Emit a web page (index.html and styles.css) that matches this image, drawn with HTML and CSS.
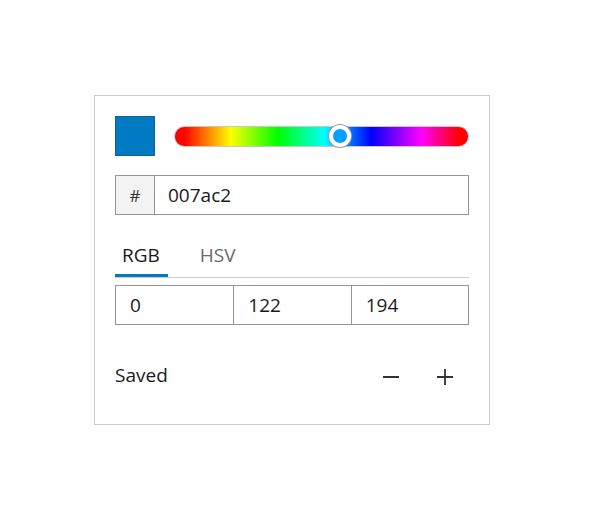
FILE: index.html
```html
<!DOCTYPE html>
<html lang="en">
<head>
<meta charset="utf-8">
<title>Color picker</title>
<link rel="stylesheet" href="styles.css">
</head>
<body>
<div class="picker">
  <div class="top-row">
    <div class="swatch"></div>
    <div class="hue">
      <div class="hue-track"></div>
      <div class="thumb" style="left: 56.3%"></div>
    </div>
  </div>
  <div class="hex">
    <span class="hash">#</span>
    <span class="hex-value">007ac2</span>
  </div>
  <div class="tabs">
    <span class="tab active">RGB</span>
    <span class="tab">HSV</span>
  </div>
  <div class="channels">
    <span class="channel">0</span>
    <span class="channel">122</span>
    <span class="channel">194</span>
  </div>
  <div class="saved-row">
    <span class="saved-label">Saved</span>
    <div class="saved-actions">
      <span class="icon-btn">
        <svg width="16" height="16" viewBox="0 0 16 16"><path d="M0 8h17" stroke="#333" stroke-width="2" fill="none"/></svg>
      </span>
      <span class="icon-btn">
        <svg width="16" height="16" viewBox="0 0 16 16"><path d="M0 8h16M8 0v16" stroke="#333" stroke-width="1.8" fill="none"/></svg>
      </span>
    </div>
  </div>
</div>
</body>
</html>
```

FILE: styles.css
```css
html, body {
  margin: 0;
  padding: 0;
  background: #fff;
}
body {
  font-family: "Open Sans", "Noto Sans", sans-serif;
  color: #1a1a1a;
}
.picker {
  box-sizing: border-box;
  width: 396px;
  margin: 95px 0 0 94px;
  border: 1px solid #cacaca;
  padding: 20px 20px 23px 20px;
}
.top-row {
  display: flex;
  align-items: center;
  gap: 19px;
}
.swatch {
  box-sizing: border-box;
  width: 40px;
  height: 40px;
  background: #007ac2;
  border: 1px solid #1d5c8e;
  flex: none;
}
.hue {
  position: relative;
  flex: 1;
  height: 21px;
}
.hue-track {
  box-sizing: border-box;
  height: 21px;
  border-radius: 11px;
  border: 1px solid #c8c8c8;
  background: linear-gradient(to right,
    #ff0000 3%, #ffff00 19%, #00ff00 35%, #00ffff 51%,
    #0000ff 67%, #ff00ff 84%, #ff0000 97%);
}
.thumb {
  position: absolute;
  top: 50%;
  box-sizing: border-box;
  width: 22px;
  height: 22px;
  margin: -11px 0 0 -11px;
  border-radius: 50%;
  background: #00a1ff;
  border: 4px solid #fff;
  box-shadow: 0 0 0 1px #9a9a9a;
}
.hex {
  box-sizing: border-box;
  display: flex;
  height: 40px;
  margin-top: 19px;
  border: 1px solid #959595;
  font-size: 19px;
}
.hash {
  box-sizing: border-box;
  width: 39px;
  display: flex;
  align-items: center;
  justify-content: center;
  background: #f3f3f3;
  border-right: 1px solid #959595;
  font-size: 17px;
  color: #333;
}
.hex-value {
  display: flex;
  align-items: center;
  padding-left: 13px;
}
.tabs {
  display: flex;
  margin-top: 20px;
  border-bottom: 1px solid #cccccc;
}
.tab {
  font-size: 19px;
  line-height: 20px;
  padding: 10px 8px 9px 7px;
  border-bottom: 3px solid transparent;
  color: #6a6a6a;
  margin-right: 25px;
}
.tab.active {
  color: #1a1a1a;
  border-bottom-color: #007ac2;
}
.channels {
  box-sizing: border-box;
  display: grid;
  grid-template-columns: 1fr 1fr 1fr;
  height: 40px;
  margin-top: 7px;
  border: 1px solid #959595;
  font-size: 19px;
}
.channel {
  display: flex;
  align-items: center;
  padding-left: 14px;
}
.channel + .channel {
  border-left: 1px solid #959595;
}
.saved-row {
  display: flex;
  align-items: center;
  justify-content: space-between;
  height: 48px;
  margin-top: 28px;
  font-size: 19px;
}
.saved-label {
  margin-bottom: 4px;
}
.saved-actions {
  display: flex;
  gap: 6px;
}
.icon-btn {
  width: 48px;
  height: 48px;
  display: flex;
  align-items: center;
  justify-content: center;
}
.icon-btn svg {
  display: block;
}
```
